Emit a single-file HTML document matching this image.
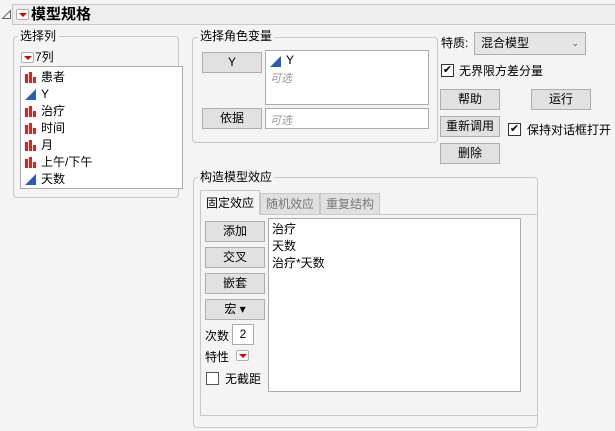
<!DOCTYPE html>
<html><head><meta charset="utf-8"><style>
*{box-sizing:border-box;margin:0;padding:0}
body{width:615px;height:431px;background:#f4f4f4;font-family:"Liberation Sans","Noto Sans CJK SC",sans-serif;font-size:12px;color:#000;position:relative;overflow:hidden}
.a{position:absolute}
.grp{position:absolute;border:1px solid #c8c8c8;border-radius:4px}
.lg{position:absolute;background:#f4f4f4;padding:0 2px;line-height:14px}
.btn{position:absolute;background:#e1e1e1;border:1px solid #adadad;text-align:center;line-height:18px;font-size:12px}
.box{position:absolute;background:#fff;border:1px solid #ababab}
.red{position:absolute;width:13px;height:11px;border:1px solid #b0b0b0;border-radius:2px;background:#fff}
.red:after{content:"";position:absolute;left:2px;top:3px;border-left:4px solid transparent;border-right:4px solid transparent;border-top:4px solid #d00}
.cb{position:absolute;width:13px;height:13px;border:1px solid #333;background:#fff;font-size:11px;line-height:11px;text-align:center}
.it{position:absolute;left:3px;height:17px;line-height:17px}
.it span{margin-left:17px}
.bar{position:absolute;left:1px;top:3px}
.ph{color:#999;font-style:italic;font-size:11px}
</style></head><body>
<svg class="a" style="left:1px;top:9px" width="11" height="11"><path d="M1.5 9.5L9.5 1.5V9.5Z" fill="none" stroke="#666" stroke-width="1"/></svg>
<div class="a" style="left:12px;top:4px;width:605px;height:21px;background:#eeeeee;border:1px solid #c8c8c8"></div>
<div class="red" style="left:16px;top:9px"></div>
<div class="a" style="left:31px;top:4px;font-size:15px;font-weight:bold;line-height:21px">模型规格</div>

<div class="grp" style="left:13px;top:36px;width:166px;height:162px"></div>
<div class="lg" style="left:18px;top:29px">选择列</div>
<div class="red" style="left:21px;top:52px"></div>
<div class="a" style="left:35px;top:50px;line-height:14px">7列</div>
<div class="box" style="left:20px;top:66px;width:163px;height:123px">
<div class="it" style="top:2px"><svg class="bar" width="11" height="11"><path d="M0 11V2h3v9zM4 11V0h3v11zM8 11V5h3v6z" fill="#d22"/></svg><span>患者</span></div>
<div class="it" style="top:19px"><svg class="bar" width="11" height="11"><path d="M0 11L11 0v11z" fill="#2c5db5"/></svg><span>Y</span></div>
<div class="it" style="top:36px"><svg class="bar" width="11" height="11"><path d="M0 11V2h3v9zM4 11V0h3v11zM8 11V5h3v6z" fill="#d22"/></svg><span>治疗</span></div>
<div class="it" style="top:53px"><svg class="bar" width="11" height="11"><path d="M0 11V2h3v9zM4 11V0h3v11zM8 11V5h3v6z" fill="#d22"/></svg><span>时间</span></div>
<div class="it" style="top:70px"><svg class="bar" width="11" height="11"><path d="M0 11V2h3v9zM4 11V0h3v11zM8 11V5h3v6z" fill="#d22"/></svg><span>月</span></div>
<div class="it" style="top:87px"><svg class="bar" width="11" height="11"><path d="M0 11V2h3v9zM4 11V0h3v11zM8 11V5h3v6z" fill="#d22"/></svg><span>上午/下午</span></div>
<div class="it" style="top:104px"><svg class="bar" width="11" height="11"><path d="M0 11L11 0v11z" fill="#2c5db5"/></svg><span>天数</span></div>
</div>

<div class="grp" style="left:192px;top:37px;width:246px;height:106px"></div>
<div class="lg" style="left:198px;top:29px">选择角色变量</div>
<div class="btn" style="left:202px;top:52px;width:60px;height:21px">Y</div>
<div class="box" style="left:265px;top:50px;width:164px;height:55px">
<svg class="a" style="left:4px;top:5px" width="11" height="11"><path d="M0 11L11 0v11z" fill="#2c5db5"/></svg>
<div class="a" style="left:20px;top:2px">Y</div>
<div class="a ph" style="left:4px;top:19px">可选</div></div>
<div class="btn" style="left:202px;top:108px;width:60px;height:21px">依据</div>
<div class="box" style="left:265px;top:108px;width:164px;height:21px"><div class="a ph" style="left:4px;top:3px">可选</div></div>

<div class="a" style="left:441px;top:34px">特质:</div>
<div class="a" style="left:474px;top:32px;width:112px;height:23px;background:#e5e5e5;border:1px solid #adadad;line-height:21px;padding-left:6px">混合模型<span style="position:absolute;right:6px;font-size:9px;color:#555">⌄</span></div>
<div class="cb" style="left:441px;top:64px">✔</div>
<div class="a" style="left:459px;top:62px">无界限方差分量</div>
<div class="btn" style="left:440px;top:89px;width:60px;height:21px">帮助</div>
<div class="btn" style="left:531px;top:89px;width:60px;height:21px">运行</div>
<div class="btn" style="left:440px;top:116px;width:60px;height:21px">重新调用</div>
<div class="cb" style="left:508px;top:123px">✔</div>
<div class="a" style="left:527px;top:121px">保持对话框打开</div>
<div class="btn" style="left:440px;top:143px;width:60px;height:21px">删除</div>

<div class="grp" style="left:193px;top:177px;width:345px;height:251px"></div>
<div class="lg" style="left:198px;top:170px">构造模型效应</div>
<div class="a" style="left:200px;top:214px;width:338px;height:202px;border:1px solid #c8c8c8;background:#f4f4f4"></div>
<div class="a" style="left:200px;top:190px;width:60px;height:25px;background:#f4f4f4;border:1px solid #c8c8c8;border-bottom:none;line-height:24px;text-align:center">固定效应</div>
<div class="a" style="left:260px;top:193px;width:60px;height:22px;background:#e0e0e0;border:1px solid #c8c8c8;color:#777;line-height:20px;text-align:center">随机效应</div>
<div class="a" style="left:320px;top:193px;width:60px;height:22px;background:#e0e0e0;border:1px solid #c8c8c8;color:#777;line-height:20px;text-align:center">重复结构</div>
<div class="box" style="left:268px;top:218px;width:253px;height:174px;padding:2px 3px;line-height:17px">治疗<br>天数<br>治疗*天数</div>
<div class="btn" style="left:205px;top:221px;width:60px;height:21px">添加</div>
<div class="btn" style="left:205px;top:247px;width:60px;height:21px">交叉</div>
<div class="btn" style="left:205px;top:273px;width:60px;height:21px">嵌套</div>
<div class="btn" style="left:205px;top:299px;width:60px;height:21px">宏 ▾</div>
<div class="a" style="left:205px;top:327px">次数</div>
<div class="box" style="left:232px;top:324px;width:22px;height:21px;text-align:center;line-height:19px">2</div>
<div class="a" style="left:205px;top:348px">特性</div>
<div class="red" style="left:236px;top:350px"></div>
<div class="cb" style="left:206px;top:372px;border-color:#555"></div>
<div class="a" style="left:225px;top:370px">无截距</div>
</body></html>
